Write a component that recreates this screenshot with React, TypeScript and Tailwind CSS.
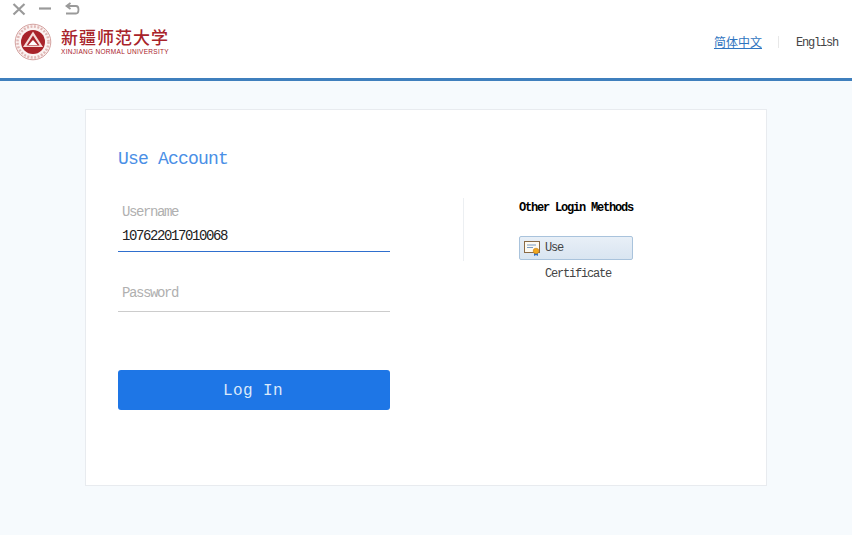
export default function App() {
  const mono = "font-['Liberation_Mono','Noto_Sans_CJK_SC',monospace]";
  return (
    <div className={`min-h-[535px] h-[535px] bg-[#f6fafd] flex flex-col overflow-hidden ${mono}`}>
      <header className="h-[81px] bg-white border-b-[3px] border-[#3f7fbd] flex flex-col shrink-0">
        <div className="h-[19px] flex items-start pl-3 pt-[2px] gap-[13px] shrink-0">
          <svg width="14" height="14" viewBox="0 0 14 14" fill="none" stroke="#9a9a9a" strokeWidth="2.2"><path d="M1.5 2l11 10.5M12.5 2l-11 10.5" /></svg>
          <svg width="13" height="14" viewBox="0 0 13 14" fill="none" stroke="#9a9a9a" strokeWidth="2.2"><path d="M0 6.5h12" /></svg>
          <svg width="15" height="14" viewBox="0 0 15 14" fill="none" stroke="#9a9a9a" strokeWidth="1.8"><path d="M5.5 1L1.5 4l4 3" /><path d="M2 4h9c2 0 2.500 1.500 2.500 3.500S13 11.500 11 11.500H1" /></svg>
        </div>
        <div className="flex items-start justify-between pl-[14px] pr-[13px]">
          <div className="flex items-start gap-[9px] mt-[4px]">
            <svg width="38" height="38" viewBox="0 0 38 38">
              <circle cx="19" cy="19" r="17.800" fill="#fbf3f2" stroke="#c98a88" strokeWidth="0.8" />
              <circle cx="19" cy="19" r="15.500" fill="none" stroke="#e0b8b6" strokeWidth="2.500" strokeDasharray="2 1.500" />
              <circle cx="19" cy="19" r="12" fill="#a8232a" />
              <path d="M19 8.500l10 15.500H9z" fill="#f6dcd9" />
              <path d="M19 12.500l6.500 10h-13z" fill="#a8232a" />
              <path d="M14.500 22l4.500-5 4.500 5z" fill="#fff" />
            </svg>
            <div className="flex flex-col items-start mt-[4px]">
              <span className="font-['Noto_Sans_CJK_SC',serif] font-medium text-[#a8232a] text-[17px] leading-[20px] tracking-[1px] whitespace-nowrap">新疆师范大学</span>
              <span className="font-['Liberation_Sans',sans-serif] text-[#a8232a] text-[6.500px] leading-[8px] tracking-[0.300px] whitespace-nowrap mt-[1px]">XINJIANG NORMAL UNIVERSITY</span>
            </div>
          </div>
          <div className="flex items-center text-xs mt-[15px]">
            <a className="text-[#2f74c0] underline font-['Noto_Sans_CJK_SC',sans-serif]">简体中文</a>
            <span className="w-px h-[12px] bg-[#e8e8e8] ml-[16px] mr-[17px]" />
            <span className="text-[#444] tracking-[-1.200px] pr-[1px] translate-y-[1px]">English</span>
          </div>
        </div>
      </header>
      <main className="w-[682px] h-[377px] ml-[85px] mt-[28px] bg-white border border-[#e8ebef] flex shrink-0">
        <section className="w-[377px] pl-[32px] shrink-0">
          <h1 className="text-[#4a8fe6] text-[18px] tracking-[-0.800px] leading-[20px] mt-[39px]">Use Account</h1>
          <div className="mt-[34px] w-[272px] h-[49px] border-b border-[#2f6fce] pl-1">
            <div className="text-[#b0b0b0] text-sm leading-[18px] tracking-[-1.400px]">Username</div>
            <div className="text-[#222] text-sm leading-[18px] tracking-[-1.400px] mt-[6px]">107622017010068</div>
          </div>
          <div className="mt-[32px] w-[272px] h-[28px] border-b border-[#cccccc] pl-1">
            <div className="text-[#b0b0b0] text-sm leading-[18px] tracking-[-1.400px]">Password</div>
          </div>
          <button className="mt-[58px] w-[272px] h-[40px] pt-[2px] rounded-[3px] bg-[#1e76e6] text-[#dbe9fb] text-base tracking-[0.400px] pr-[2px]">Log In</button>
        </section>
        <div className="w-px h-[63px] bg-[#eceff2] mt-[88px] shrink-0" />
        <section className="pl-[55px]">
          <div className="text-xs text-black font-bold leading-[14px] tracking-[-1.200px] mt-[91px] whitespace-nowrap">Other Login Methods</div>
          <div className="mt-[21px] w-[114px] h-[24px] rounded-[2px] border border-[#a9c3dc] bg-gradient-to-b from-[#e8eff7] to-[#d9e5f1] flex items-center pl-[4px] gap-[4px] text-xs text-[#444] tracking-[-1.200px]">
            <svg width="17" height="15" viewBox="0 0 17 15" className="shrink-0">
              <rect x="0.500" y="0.500" width="15" height="11" fill="#fdfaf2" stroke="#8a6a45" />
              <path d="M3 4h9M3 6.500h6" stroke="#7b9cc4" strokeWidth="1" />
              <path d="M10 11l0 4 2-1 2 1 0-4z" fill="#2f6fc6" />
              <circle cx="12" cy="10" r="2.800" fill="#f2a81f" stroke="#c77f10" strokeWidth="0.600" />
            </svg>
            <span>Use</span>
          </div>
          <div className="text-xs text-[#444] leading-[14px] tracking-[-1.200px] mt-[7px] ml-[26px]">Certificate</div>
        </section>
      </main>
    </div>
  );
}
